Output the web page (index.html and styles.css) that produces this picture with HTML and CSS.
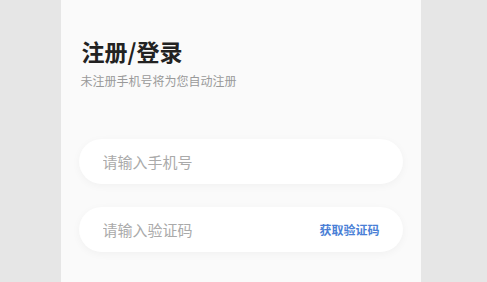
FILE: index.html
```html
<!DOCTYPE html>
<html lang="zh-CN">
<head>
    <meta charset="UTF-8" />
    <meta name="viewport" content="width=device-width, initial-scale=1.0"/>
    <title>注册/登录</title>
    <link rel="stylesheet" href="styles.css">
</head>
<body>
    <div class="page">
        <div class="login-panel">
            <div class="header">
                <h1>注册/登录</h1>
                <p>未注册手机号将为您自动注册</p>
            </div>

            <div class="form">
                <div class="field">
                    <input type="tel" placeholder="请输入手机号" />
                </div>
                <div class="field">
                    <input type="text" placeholder="请输入验证码" />
                    <a class="get-code" href="#">获取验证码</a>
                </div>
            </div>
        </div>
    </div>
</body>
</html>
```

FILE: styles.css
```css
* {
    margin: 0;
    padding: 0;
    box-sizing: border-box;
}

body {
    font-family: "Noto Sans CJK SC", "Noto Sans", sans-serif;
    background: #e6e6e6;
    height: 100vh;
    overflow: hidden;
}

.page {
    display: flex;
    justify-content: center;
    height: 100%;
    padding-right: 6px;
}

.login-panel {
    width: 360px;
    height: 100%;
    background: #fafafa;
    padding: 35px 18px 0;
}

.header {
    padding-left: 3px;
}

.header h1 {
    font-size: 23px;
    font-weight: bold;
    color: #222;
    line-height: 32px;
}

.header p {
    font-size: 12px;
    color: #999;
    line-height: 18px;
    margin-top: 5px;
    margin-left: -1px;
}

.form {
    margin-top: 49px;
    display: flex;
    flex-direction: column;
    gap: 23px;
}

.field {
    height: 45px;
    background: #fff;
    border-radius: 23px;
    box-shadow: 0 2px 8px rgba(0, 0, 0, 0.04);
    display: flex;
    align-items: center;
    padding: 0 23px 0 24px;
}

.field input {
    flex: 1;
    min-width: 0;
    border: none;
    outline: none;
    background: transparent;
    font-family: inherit;
    font-size: 15px;
    color: #333;
}

.field input::placeholder {
    color: #aaa;
}

.get-code {
    font-size: 12px;
    font-weight: bold;
    color: #4a7fd6;
    text-decoration: none;
    white-space: nowrap;
}
```
